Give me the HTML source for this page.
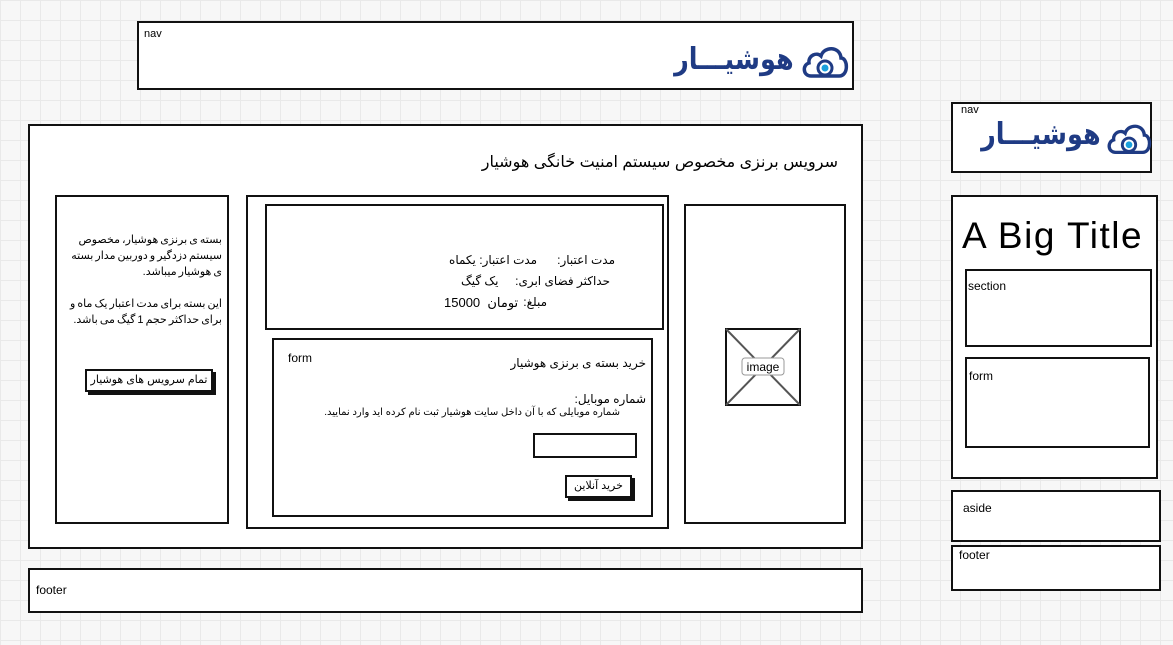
<!DOCTYPE html>
<html><head><meta charset="utf-8"><style>
body{margin:0;width:1173px;height:645px;overflow:hidden;position:relative;background-color:#f7f7f7;
background-image:linear-gradient(#e9e9e9 1px,transparent 1px),linear-gradient(90deg,#e9e9e9 1px,transparent 1px);background-size:20px 20px;
font-family:"Liberation Sans","DejaVu Sans",sans-serif;color:#000}
.b{position:absolute;border:2px solid #111;background:#fff;box-sizing:border-box}
.t{position:absolute;white-space:nowrap;font-size:12px}
.r{direction:rtl;text-align:right}
.btn{position:absolute;border:2px solid #111;background:#fff;box-shadow:3px 3px 0 #111;font-size:11px;text-align:center;box-sizing:border-box;direction:rtl;white-space:nowrap;overflow:hidden}
.logo{position:absolute;color:#1f3b84;font-weight:bold;font-family:"DejaVu Sans",sans-serif;direction:rtl;white-space:nowrap;overflow:hidden;height:44px;line-height:44px}
.logo span{display:inline-block;transform:scaleX(0.85);transform-origin:right center}
</style></head><body>
<div class="b" style="left:137px;top:21px;width:717px;height:69px"></div>
<div class="t" style="left:144px;top:28px;font-size:11px">nav</div>
<svg style="position:absolute;left:801px;top:43px" width="48" height="36" viewBox="0 0 48 36"><path d="M10 33 C2 33 1 22 8 20 C7 12 16 9 20 13 C23 3 39 3 40 15 C47 15 48 33 38 33 Z" fill="none" stroke="#1f3b84" stroke-width="3.5"/><circle cx="24" cy="25" r="7" fill="none" stroke="#1f3b84" stroke-width="3"/><circle cx="24" cy="25" r="3.5" fill="#1aa0dc"/></svg>
<div class="logo" style="left:656px;top:38px;font-size:30px;width:138px;text-align:right"><span>هوشیـــار</span></div>

<div class="b" style="left:28px;top:124px;width:835px;height:425px"></div>
<div class="t r" style="left:400px;width:438px;top:152px;font-size:16px">سرویس برنزی مخصوص سیستم امنیت خانگی هوشیار</div>

<div class="b" style="left:55px;top:195px;width:174px;height:329px"></div>
<div class="t r" style="left:62px;width:160px;top:232px;white-space:normal;line-height:16px;font-size:11px;letter-spacing:-0.4px;word-spacing:-1px">بسته ی برنزی هوشیار، مخصوص سیستم دزدگیر و دوربین مدار بسته ی هوشیار میباشد.<br><br>این بسته برای مدت اعتبار یک ماه و برای حداکثر حجم 1 گیگ می باشد.</div>
<div class="btn" style="left:85px;top:369px;width:128px;height:23px;line-height:19px">تمام سرویس های هوشیار</div>

<div class="b" style="left:246px;top:195px;width:423px;height:334px"></div>
<div class="b" style="left:265px;top:204px;width:399px;height:126px"></div>
<div class="t r" style="left:420px;width:195px;top:253px">مدت اعتبار:&nbsp;&nbsp;&nbsp;&nbsp;&nbsp;&nbsp;مدت اعتبار: یکماه</div>
<div class="t r" style="left:420px;width:190px;top:274px">حداکثر فضای ابری:&nbsp;&nbsp;&nbsp;&nbsp;&nbsp;یک گیگ</div>
<div class="t r" style="left:420px;width:127px;top:295px">مبلغ:</div>
<div class="t" style="left:444px;top:295px;font-size:13px">15000 &nbsp;تومان</div>

<div class="b" style="left:272px;top:338px;width:381px;height:179px"></div>
<div class="t" style="left:288px;top:351px">form</div>
<div class="t r" style="left:400px;width:246px;top:356px">خرید بسته ی برنزی هوشیار</div>
<div class="t r" style="left:400px;width:246px;top:392px">شماره موبایل:</div>
<div class="t r" style="left:300px;width:320px;top:407px;font-size:10px">شماره موبایلی که با آن داخل سایت هوشیار ثبت نام کرده اید وارد نمایید.</div>
<div class="b" style="left:533px;top:433px;width:104px;height:25px"></div>
<div class="btn" style="left:565px;top:475px;width:67px;height:23px;line-height:19px">خرید آنلاین</div>

<div class="b" style="left:684px;top:204px;width:162px;height:320px"></div>
<svg style="position:absolute;left:725px;top:328px" width="76" height="78"><rect x="1" y="1" width="74" height="76" fill="#fff" stroke="#111" stroke-width="2"/><path d="M1 1 L75 77 M75 1 L1 77" stroke="#555" stroke-width="2"/><rect x="17" y="30" width="42" height="17" rx="3" fill="#fff" stroke="#999"/><text x="38" y="43" font-size="12" text-anchor="middle" font-family="Liberation Sans">image</text></svg>

<div class="b" style="left:28px;top:568px;width:835px;height:45px"></div>
<div class="t" style="left:36px;top:583px">footer</div>

<div class="b" style="left:951px;top:102px;width:201px;height:71px"></div>
<div class="t" style="left:961px;top:104px;font-size:11px">nav</div>
<svg style="position:absolute;left:1106px;top:120px" width="46" height="36" viewBox="0 0 48 36"><path d="M10 33 C2 33 1 22 8 20 C7 12 16 9 20 13 C23 3 39 3 40 15 C47 15 48 33 38 33 Z" fill="none" stroke="#1f3b84" stroke-width="3.5"/><circle cx="24" cy="25" r="7" fill="none" stroke="#1f3b84" stroke-width="3"/><circle cx="24" cy="25" r="3.5" fill="#1aa0dc"/></svg>
<div class="logo" style="left:963px;top:113px;font-size:30px;width:138px;text-align:right"><span>هوشیـــار</span></div>

<div class="b" style="left:951px;top:195px;width:207px;height:284px"></div>
<div class="t" style="left:962px;top:215px;font-size:37px;letter-spacing:1.5px">A Big Title</div>
<div class="b" style="left:965px;top:269px;width:187px;height:78px"></div>
<div class="t" style="left:968px;top:279px">section</div>
<div class="b" style="left:965px;top:357px;width:185px;height:91px"></div>
<div class="t" style="left:969px;top:369px">form</div>
<div class="b" style="left:951px;top:490px;width:210px;height:52px"></div>
<div class="t" style="left:963px;top:501px">aside</div>
<div class="b" style="left:951px;top:545px;width:210px;height:46px"></div>
<div class="t" style="left:959px;top:548px">footer</div>
</body></html>
